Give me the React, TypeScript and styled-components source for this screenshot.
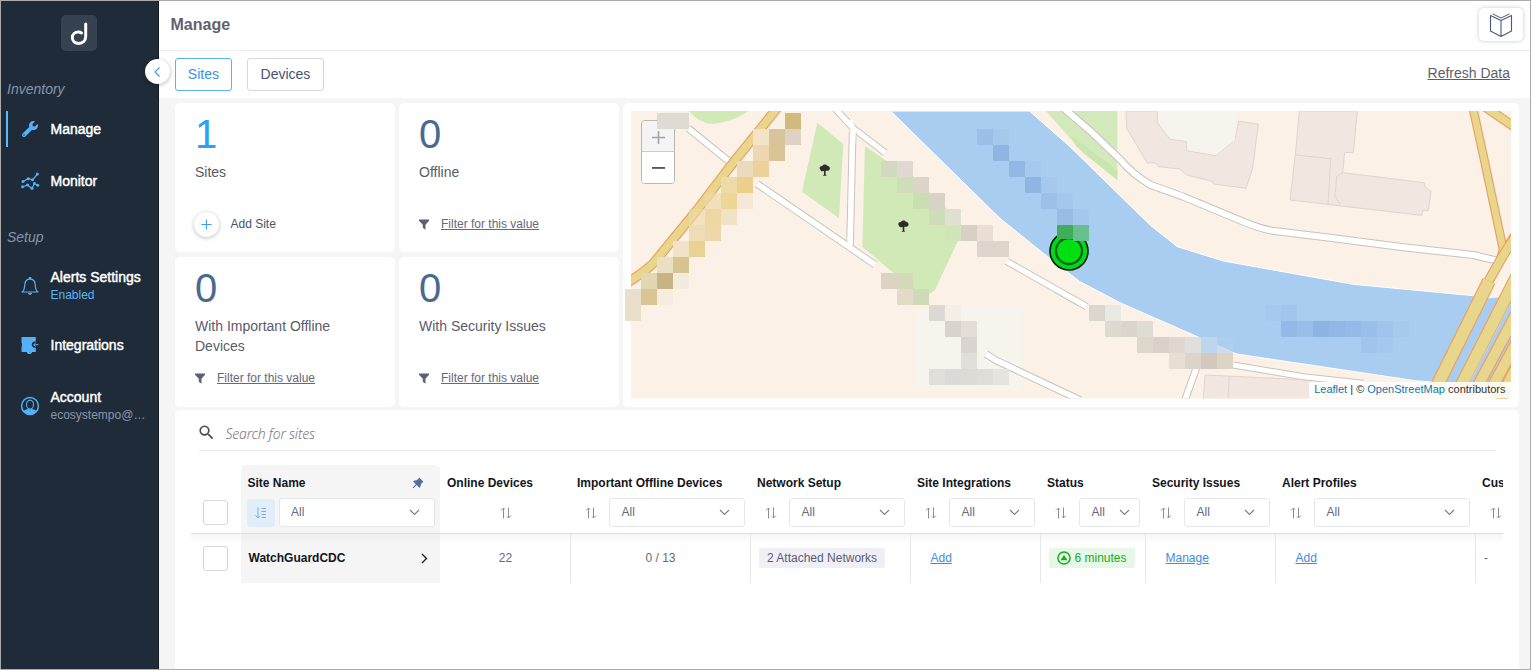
import React from 'react';
import styled, { createGlobalStyle } from 'styled-components';
import { FaWrench } from 'react-icons/fa';
import { MdSearch } from 'react-icons/md';
import { AiFillPushpin } from 'react-icons/ai';

const sans = `"Liberation Sans", Arial, sans-serif`;

const GlobalStyle = createGlobalStyle`
  *, *::before, *::after { box-sizing: border-box; }
  body { margin: 0; font-family: ${sans}; color: #55586a; background: #f5f5f6; }
`;

const Shell = styled.div`
  display: flex;
  width: 100%;
  height: 670px;
  border: 1px solid #aaa;
  overflow: hidden;
`;

/* ---------- sidebar ---------- */

const Sidebar = styled.nav`
  position: relative;
  width: 158px;
  flex: none;
  background: #1f2b38;
  border-right: 1px solid #131a23;
  padding-top: 14px;
`;

const Logo = styled.div`
  width: 36px;
  height: 36px;
  margin: 0 0 28px 60px;
  border-radius: 5px;
  background: #36424f;
`;

const GroupLabel = styled.div<{ $after: number }>`
  height: 20px;
  line-height: 20px;
  padding-left: 6px;
  margin-bottom: ${(p) => p.$after}px;
  font-size: 14px;
  font-style: italic;
  color: #8894ab;
`;

const NavItem = styled.div<{ $active?: boolean; $after: number }>`
  display: flex;
  align-items: center;
  height: 36px;
  margin: 0 0 ${(p) => p.$after}px 5px;
  border-left: 2px solid ${(p) => (p.$active ? '#5db9fb' : 'transparent')};
  padding-left: 12px;
`;

const NavIcon = styled.span`
  display: flex;
  width: 20px;
  height: 20px;
  margin-right: 10.5px;
  align-items: center;
  justify-content: center;
  color: #54b1f8;
`;

const NavText = styled.div`
  font-size: 14px;
  line-height: 18px;
  color: #fff;
  -webkit-text-stroke: 0.45px #fff;
  white-space: nowrap;
`;

const NavSub = styled.div<{ $color: string }>`
  font-size: 12px;
  line-height: 18px;
  color: ${(p) => p.$color};
  -webkit-text-stroke: 0;
`;

const CollapseButton = styled.div`
  position: absolute;
  top: 58px;
  left: 144px;
  width: 25px;
  height: 25px;
  border-radius: 50%;
  background: #fff;
  box-shadow: 0 1px 4px rgba(0, 0, 0, 0.3);
  display: flex;
  align-items: center;
  justify-content: center;
  z-index: 2;
`;

/* ---------- main ---------- */

const Main = styled.main`
  flex: 1;
  min-width: 0;
  display: flex;
  flex-direction: column;
  background: #f5f5f6;
`;

const Header = styled.header`
  height: 50px;
  flex: none;
  display: flex;
  justify-content: space-between;
  background: #fff;
  border-bottom: 1px solid #ececee;
  padding: 7px 7px 0 11.5px;
`;

const Title = styled.h1`
  margin: 7px 0 0;
  font-size: 16px;
  line-height: 20px;
  color: #5f6170;
`;

const DocsButton = styled.div`
  width: 44px;
  height: 33px;
  border-radius: 5px;
  background: #fff;
  box-shadow: 0 0 4px rgba(0, 0, 0, 0.22);
  display: flex;
  justify-content: center;
  align-items: center;
`;

const TabBar = styled.div`
  height: 47px;
  flex: none;
  display: flex;
  background: #fff;
  padding: 7px 20px 0 15.5px;
  margin-bottom: 5px;
`;

const Tab = styled.div<{ $active?: boolean }>`
  height: 33px;
  padding: 0 12.3px;
  margin-right: 15px;
  border: 1px solid ${(p) => (p.$active ? '#5cb3e9' : '#d6d7da')};
  border-radius: 3px;
  font-size: 14px;
  line-height: 30px;
  color: ${(p) => (p.$active ? '#3d8fe6' : '#4a5270')};
`;

const Refresh = styled.a`
  margin-left: auto;
  font-size: 14px;
  line-height: 31px;
  text-decoration: underline;
  color: #5c5f6c;
`;

const Overview = styled.section`
  display: grid;
  grid-template-columns: 220px 220px 896px;
  column-gap: 4px;
  height: 304px;
  flex: none;
  padding-left: 16px;
`;

const StatColumn = styled.div`
  display: grid;
  grid-template-rows: 149px 150px;
  row-gap: 5px;
`;

const StatCard = styled.div`
  background: #fff;
  border-radius: 5px;
  padding: 8px 20px 0;
  display: flex;
  flex-direction: column;
`;

const StatValue = styled.div<{ $accent?: boolean }>`
  height: 46px;
  line-height: 47px;
  font-size: 40px;
  color: ${(p) => (p.$accent ? '#2c9ff7' : '#4b6a8e')};
`;

const StatLabel = styled.div`
  margin-top: 5px;
  font-size: 14px;
  line-height: 20px;
  min-height: 40px;
  color: #5a5b69;
`;

const StatAction = styled.div`
  display: flex;
  align-items: center;
  height: 26px;
  margin-top: 9px;
  font-size: 12px;
`;

const FilterLink = styled.a`
  margin-left: 12px;
  color: #666979;
  text-decoration: underline;
`;

const AddCircle = styled.span`
  width: 25px;
  height: 25px;
  margin-left: -1px;
  border-radius: 50%;
  box-shadow: 0 1px 4px rgba(0, 0, 0, 0.26);
  display: flex;
  align-items: center;
  justify-content: center;
`;

const AddText = styled.span`
  margin-left: 11.5px;
  color: #45546b;
`;

const MapCard = styled.div`
  position: relative;
  background: #fff;
  border-radius: 5px;
`;

const MapArt = styled.svg`
  display: block;
`;

const MapOverlay = styled.svg`
  position: absolute;
  inset: 0;
`;

const ZoomControl = styled.div`
  position: absolute;
  left: 18px;
  top: 17px;
  width: 34px;
  height: 64px;
  border: 1.5px solid #bcb6b0;
  border-radius: 4px;
  overflow: hidden;
`;

const ZoomButton = styled.div<{ $disabled?: boolean }>`
  height: 31px;
  padding-top: ${(p) => (p.$disabled ? 3 : 0)}px;
  display: flex;
  align-items: center;
  justify-content: center;
  background: ${(p) => (p.$disabled ? '#f4f4f4' : '#fff')};
  border-bottom: ${(p) => (p.$disabled ? '1px solid #ccc' : 'none')};
`;

const Attribution = styled.div`
  position: absolute;
  right: 8px;
  bottom: 9px;
  height: 16px;
  padding: 0 5.5px;
  background: rgba(255, 255, 255, 0.86);
  font-size: 11px;
  line-height: 15px;
  color: #333;
  white-space: nowrap;

  a { color: #0f78a8; }
`;

/* ---------- table ---------- */

const TableCard = styled.section`
  width: 1344px;
  flex: 1;
  margin: 3px 0 0 16px;
  padding: 0 16px;
  background: #fff;
  border-radius: 5px 5px 0 0;
  overflow: hidden;
`;

const SearchBar = styled.div`
  display: flex;
  align-items: center;
  height: 41px;
  margin: 0 7px 14px 8px;
  border-bottom: 1px solid #e9eaec;
  color: #484a58;

  svg { margin: 5px 10px 0 -2.5px; }
`;

const SearchHint = styled.span`
  margin-top: 7px;
  font-family: "Noto Sans", "Open Sans", sans-serif;
  font-style: italic;
  font-weight: 300;
  font-size: 14px;
  letter-spacing: -0.2px;
  line-height: 20px;
  color: #777883;
`;

const Row = styled.div<{ $height: number; $lined?: boolean }>`
  display: flex;
  width: 1312px;
  height: ${(p) => p.$height}px;
  overflow: hidden;
  border-bottom: ${(p) => (p.$lined ? '1px solid #dededf' : 'none')};
`;

const BodyRow = styled(Row)`
  background: linear-gradient(#f6f6f7, #fff 9px);
`;

const CheckCell = styled.div<{ $top: number }>`
  width: 50px;
  flex: none;
  padding: ${(p) => p.$top}px 0 0 12px;
`;

const Checkbox = styled.div`
  width: 25px;
  height: 25px;
  border: 1.5px solid #d6d7db;
  border-radius: 3px;
  background: #fff;
`;

const HeadCell = styled.div<{ $width: number; $pinned?: boolean }>`
  width: ${(p) => p.$width}px;
  flex: none;
  background: ${(p) => (p.$pinned ? '#f5f5f6' : 'transparent')};
  border-radius: 5px 5px 0 0;
  padding: 8px 5px 0 ${(p) => (p.$pinned ? 5.5 : 6.5)}px;
`;

const HeadTitle = styled.div<{ $indent?: number }>`
  display: flex;
  align-items: center;
  justify-content: space-between;
  height: 20px;
  padding: 0 8px 0 ${(p) => p.$indent ?? 0.5}px;
  font-size: 12px;
  font-weight: 700;
  line-height: 18px;
  color: #14161c;
  white-space: nowrap;

  svg { margin-right: 2px; }
`;

const HeadTools = styled.div<{ $center?: boolean }>`
  display: flex;
  align-items: center;
  justify-content: ${(p) => (p.$center ? 'center' : 'flex-start')};
  height: 29px;
  margin-top: 5px;
`;

const SortBox = styled.span<{ $active?: boolean }>`
  width: 28px;
  height: 28px;
  flex: none;
  margin-right: ${(p) => (p.$active ? 4 : 4.5)}px;
  border-radius: 3px;
  background: ${(p) => (p.$active ? '#e1eefa' : 'transparent')};
  display: flex;
  align-items: center;
  justify-content: center;
`;

const Select = styled.div<{ $tight?: boolean }>`
  flex: 1;
  display: flex;
  align-items: center;
  justify-content: space-between;
  height: 29px;
  border: 1px solid #e6e7ea;
  border-radius: 3px;
  background: #fff;
  padding: 0 ${(p) => (p.$tight ? 9 : 14)}px 1px 11.5px;
  font-size: 12px;
  color: #666979;
`;

const Cell = styled.div<{ $width: number; $pad: number; $border?: boolean; $center?: boolean }>`
  width: ${(p) => p.$width}px;
  flex: none;
  display: flex;
  align-items: center;
  justify-content: ${(p) => (p.$center ? 'center' : 'flex-start')};
  padding: 0 0 1px ${(p) => p.$pad}px;
  border-left: 1px solid ${(p) => (p.$border ? '#e6e7ea' : 'transparent')};
  font-size: 12px;
  white-space: nowrap;
  color: #666979;
`;

const NameCell = styled.div`
  width: 199px;
  flex: none;
  display: flex;
  align-items: center;
  justify-content: space-between;
  background: linear-gradient(#efeff0, #f5f5f6 9px);
  padding: 0 12px 1px 7.5px;
  font-size: 12px;
  font-weight: 700;
  color: #14161c;
`;

const Tag = styled.span<{ $ok?: boolean }>`
  display: flex;
  align-items: center;
  height: 20px;
  padding: 0 8px;
  border-radius: 2px;
  background: ${(p) => (p.$ok ? '#e7f8e8' : '#efeff5')};
  color: ${(p) => (p.$ok ? '#1aab1f' : '#5a5c78')};

  svg { margin-right: 3.5px; }
`;

const CellLink = styled.a`
  color: #3b8ede;
  text-decoration: underline;
`;

/* ---------- icons ---------- */

const MonitorIcon = () => (
  <svg width="20" height="20" viewBox="0 0 20 20" fill="none" stroke="#54b1f8" strokeWidth="1.2">
    <path d="M3 10.500 L8.500 7.500 L12.500 9 L17.500 3" />
    <path d="M2.500 16 L7.500 14 L12 17.500 L14.500 12.500 L18 14.500" />
    <g fill="#54b1f8" stroke="none">
      {[[3, 10.5], [8.2, 7.7], [12.5, 8.8], [17.3, 3], [2.6, 15.8], [7.6, 14], [12, 17.2], [14.5, 12.5], [17.7, 14.2]].map(([x, y], i) => (
        <circle key={i} cx={x} cy={y} r="1.500" />
      ))}
    </g>
  </svg>
);

const BellIcon = () => (
  <svg width="20" height="20" viewBox="0 0 20 20" fill="none" stroke="#54b1f8" strokeWidth="1.2">
    <path d="M2 16 H18 C15.5 14.5 15.4 12 15.2 8.5 C15 5 12.6 3.2 10 3.2 C7.400 3.2 5 5 4.800 8.500 C4.600 12 4.500 14.500 2 16 Z" strokeLinejoin="round" />
    <path d="M10 1 V3" strokeWidth="2.400" />
    <path d="M8 17.300 H12 L10 18.700 Z" fill="#54b1f8" strokeWidth="0.800" />
  </svg>
);

const PuzzleIcon = () => (
  <svg width="20" height="20" viewBox="0 0 20 20">
    <path
      d="M1.500 2 H15.800 V6.500 C13 6 11.800 7.800 11.800 9.600 C11.800 11.600 13.200 13.300 15.800 12.700 V17 H12 C11.600 19.800 7.200 19.800 6.800 17 H1.500 V12.200 C2.200 11.800 2.200 8.200 1.500 7.800 Z"
      fill="#54b1f8"
    />
    <path d="M18.500 9.700 H13.800 M15.800 7.800 L13.700 9.700 L15.800 11.500" fill="none" stroke="#54b1f8" strokeWidth="1" />
  </svg>
);

const AccountIcon = () => (
  <svg width="20" height="20" viewBox="0 0 20 20" fill="none" stroke="#54b1f8">
    <circle cx="10" cy="10" r="8.400" strokeWidth="1.500" />
    <path d="M3.500 15.500 C5 13.600 8 14 8 12.600 L10 14 L12 12.600 C12 14 15 13.600 16.500 15.500 C13.500 19 6.500 19 3.500 15.500 Z" fill="#54b1f8" strokeWidth="0.500" />
    <ellipse cx="10" cy="8.600" rx="3.500" ry="4.500" strokeWidth="1.100" fill="#1f2b38" />
  </svg>
);

const LogoMark = () => (
  <svg width="36" height="36" viewBox="0 0 36 36" fill="none" stroke="#fff" strokeWidth="3" strokeLinecap="round">
    <path d="M24.700 9 V21.300 C24.700 25.800 21.700 28.400 17.800 28.400 C14 28.400 11.300 26 11.300 22.600 C11.300 19.300 14 17.100 17.300 17.100 C18.700 17.100 19.800 17.500 20.500 18" />
  </svg>
);

const BookIcon = () => (
  <svg width="24" height="26" viewBox="0 0 24 26" fill="none" stroke="#485a78" strokeWidth="1.100" strokeLinejoin="round">
    <path d="M1.500 3.500 L12 8.500 L22.500 3.500 V19 L12 24.500 L1.500 19 Z M12 8.500 V24.500" />
    <path d="M3.500 1.800 L12 6 L20.500 1.800" strokeWidth="1" />
  </svg>
);

const FunnelIcon = () => (
  <svg width="10" height="11" viewBox="0 0 10 11">
    <path d="M0 0.500 H10 V1.700 L6.500 5.800 V10.700 L3.800 8.800 V5.800 L0 1.700 Z" fill="#5d5f72" />
  </svg>
);

const SortIcon = () => (
  <svg width="12" height="12" viewBox="0 0 12 12" fill="none" stroke="#8a8d9b" strokeWidth="1">
    <path d="M3.500 11.500 V1 M1 3.500 L3.500 1 L5 2.500 M8.500 0.500 V11 M7 9.500 L8.500 11 L11 8.500" />
  </svg>
);

const SortDescIcon = () => (
  <svg width="12" height="12" viewBox="0 0 12 12" fill="none" stroke="#6fb2e6" strokeWidth="1">
    <path d="M3 0.500 V11 M0.500 8.500 L3 11 L5 9 M6.500 1.500 H11 M6.500 4.500 H11 M6.500 7.500 H11 M6.500 10.500 H11" />
  </svg>
);

const ChevronDown = () => (
  <svg width="11" height="7" viewBox="0 0 11 7" fill="none" stroke="#777a88" strokeWidth="1.100">
    <path d="M1 1 L5.500 5.500 L10 1" />
  </svg>
);

const StatusUpIcon = () => (
  <svg width="14" height="14" viewBox="0 0 14 14">
    <circle cx="7" cy="7" r="6.100" fill="none" stroke="#1aab1f" strokeWidth="1.500" />
    <path d="M7 4 L10.500 9.300 H3.500 Z" fill="#1aab1f" />
  </svg>
);

/* ---------- map ---------- */

// Blurred-out street names: [column, row, colour, opacity] on a 16px grid.
const mosaic: [number, number, string, number?][] = [
  [2, 0, '#dedbd6'], [3, 0, '#dfdad2'],
  [10, 0, '#d2ba7f'], [9, 1, '#d8c498'], [10, 1, '#dfd2c5'], [8, 1, '#f2e3c9'], [9, 2, '#d8c496'],
  [8, 2, '#edd8b3'], [8, 3, '#ecd199'], [7, 3, '#e9dbbb'], [7, 4, '#ebd08c'], [6, 4, '#eddba9'],
  [6, 5, '#eed697'], [7, 5, '#f5e8d8'], [5, 5, '#eed9a6', 0.7], [5, 6, '#efd7a4'], [6, 6, '#f2e2c4'],
  [5, 7, '#eed8ab'], [4, 6, '#efd8a8', 0.6], [4, 7, '#efdcb5'], [4, 8, '#ead294'], [3, 8, '#f1e2c8'],
  [3, 9, '#d8c48f'], [2, 9, '#eadfc3'], [2, 10, '#c8b385'], [1, 10, '#e3d7b2'], [3, 10, '#f3ebdf'],
  [1, 11, '#dac694'], [0, 11, '#e9dfcd'], [2, 11, '#f6ecdf'], [0, 12, '#eae0ca'],
  [16, 3, '#d3d9be'], [17, 3, '#e0d8d1'], [17, 4, '#cfdeb8'], [18, 4, '#ddd5c9'], [18, 5, '#cbdeb1'],
  [19, 5, '#d8d2c8'], [19, 6, '#cfdcb8'], [20, 6, '#e0e0d2'], [20, 7, '#d1e6b8'], [21, 7, '#d8cfc6'],
  [22, 7, '#ebdfd3'], [22, 8, '#dfd5cd'], [23, 8, '#e0d5ca'],
  [16, 10, '#ddd3c5'], [17, 10, '#d3dab9'], [17, 11, '#e2dbc8'], [18, 11, '#cfdab8'],
  [19, 12, '#dcd8d4'], [20, 12, '#f4eee7'], [20, 13, '#d9d3cd'], [21, 13, '#e4ddd6'], [21, 14, '#dad5d0'],
  [21, 15, '#e2dfda'], [19, 16, '#e2dfdb'], [20, 16, '#dcdad7'], [21, 16, '#dedad6'], [22, 16, '#e0dcd8'], [23, 16, '#e7e3df'],
  [22, 1, '#9bbfe8'], [23, 1, '#a5c8ed'], [23, 2, '#8fb6e3'], [24, 3, '#93b8e5'], [25, 3, '#a6c9ee'],
  [25, 4, '#8fb5e3'], [26, 4, '#a6c8ed'], [26, 5, '#9cc0e9'], [27, 5, '#a5c7ed'], [27, 6, '#99bce7'], [28, 6, '#a5c7ed'],
  [29, 12, '#dbd7cf'], [30, 12, '#e9e8e2'], [30, 13, '#dfdad0'], [31, 13, '#dcd5cb'], [32, 13, '#dfdcd4'],
  [32, 14, '#ded7cc'], [33, 14, '#d9d2c8'], [34, 14, '#ded8d0'], [35, 14, '#dfe0dc'], [36, 14, '#bdd6ed'], [37, 14, '#b0cfec', 0.6],
  [34, 15, '#e7dfd3'], [35, 15, '#ddd5cb'], [36, 15, '#d2c8be'], [37, 15, '#ddd4c6'],
  [40, 12, '#a6c9ee'], [41, 12, '#a1c5ed'], [41, 13, '#92b9e7'], [42, 13, '#98bee9'], [43, 13, '#8db5e4'],
  [44, 13, '#90b7e5'], [45, 13, '#94bae7'], [46, 13, '#9abfe9'], [47, 13, '#a0c4ec'], [48, 13, '#a6c9ee'],
  [46, 14, '#a0c4ec'], [47, 14, '#a4c8ee'],
];

const Road = ({ d, w = 15 }: { d: string; w?: number }) => (
  <g fill="none" strokeLinejoin="round">
    <path d={d} stroke="#c8c3be" strokeWidth={w + 6} />
    <path d={d} stroke="#fff" strokeWidth={w} />
  </g>
);

const Highway = ({ d, w }: { d: string; w: number }) => (
  <g fill="none" strokeLinejoin="round">
    <path d={d} stroke="#eba063" strokeWidth={w + 7} />
    <path d={d} stroke="#e7d68c" strokeWidth={w} />
  </g>
);

const Tree = ({ x, y }: { x: number; y: number }) => (
  <path
    transform={`translate(${x} ${y})`}
    d="M-14 -2 C-18 -10 -10 -12 -7 -12 C-4 -18 6 -17 7 -13 C14 -13 18 -6 14 0 C10 4 4 2 3 2 V14 L6 17 H-6 L-2 14 V2 C-6 6 -12 4 -14 -2 Z"
    fill="#2c2c2c"
  />
);

const CityMap = () => (
  <MapArt width="896" height="304" viewBox="623 103 896 304">
    <defs>
      <clipPath id="map-area">
        <rect x="631" y="111" width="880" height="287.500" />
      </clipPath>
    </defs>
    <g clipPath="url(#map-area)">
      <rect x="631" y="111" width="880" height="288" fill="#fbf1e6" />
      <g transform="translate(620 100) scale(0.333333)">
        <path d="M207 33 H385 C350 60 290 76 260 70 C235 60 220 50 207 33 Z" fill="#d1e9b7" />
        <path d="M592 68 L670 132 L657 354 L546 275 Z" fill="#d1e9b7" />
        <path d="M735 138 L800 183 H850 L880 231 L975 320 L1023 375 V415 L1015 420 L945 570 L925 585 L880 570 L727 440 Z" fill="#d1e9b7" />
        <path d="M890 640 L960 620 H1210 V870 H880 Z" fill="#f7f3ed" />
        <path d="M812 33 H1228 L1350 140 L1590 375 L1672 440 L1810 483 L2200 553 L2560 587 L2760 596 V870 L2385 842 L1850 762 L1500 608 L1380 545 L1280 468 L1140 355 Z" fill="#a9cdf0" stroke="#fff" strokeWidth="3" />
        <path d="M1278 33 H1492 V240 L1390 160 Z" fill="#d3e9bb" />
        <path d="M1492 210 V240 L1370 140 L1350 105 Z" fill="#c8e6ae" />
      </g>
      <g transform="translate(1070 100) scale(0.333333)">
        <g fill="#f1e7e0" stroke="#e0d4ce" strokeWidth="3">
          <path d="M168 33 H262 V68 L300 118 L350 124 V152 L438 167 L494 120 L506 64 L565 72 L548 205 L528 265 L432 252 L425 243 L350 225 L330 207 L265 200 L255 188 L232 189 L170 85 Z" />
          <path d="M688 33 H862 L850 158 L824 157 L818 218 L1062 248 L1066 262 L1083 274 L1075 332 L1060 330 L1055 346 L660 300 L676 165 Z" />
          <path d="M676 165 L782 176 L774 312 M818 218 L800 230 L795 290 L810 312" fill="none" />
          <path d="M405 825 L720 840 V900 H400 Z M478 828 L474 900" />
        </g>
        <path d="M266 33 H503 L494 120 L438 165 L352 150 V122 L302 116 L264 66 Z" fill="#f7f4ee" />
        <Road d="M-60 -10 L60 92 L150 178 Q185 220 240 254 L340 290 L520 365 Q580 390 620 394 L780 413 L1000 442 L1210 465 L1290 484" w={18} />
        <Road d="M490 795 L700 830 L880 850" w={15} />
        <Road d="M384 790 L345 900" w={17} />
        <Road d="M-40 570 L30 610" w={15} />
        <path d="M1215 600 L1345 400 V640 L1300 590 Z" fill="#fbf3ea" />
        <Highway d="M1215 0 L1350 92" w={22} />
        <Highway d="M1345 392 L1312 440" w={22} />
        <Highway d="M1208 20 L1245 190 L1300 450 L1290 480" w={20} />
        <Highway d="M1345 395 L1300 465 L1235 580" w={24} />
        <Highway d="M1347 516 L1160 883" w={33} />
        <Highway d="M1257 543 L1095 870" w={35} />
        <Highway d="M1355 612 L1210 883" w={30} />
        <Highway d="M1360 690 L1255 883" w={30} />
        <Highway d="M1370 740 L1290 900" w={30} />
        <path d="M1322 610 L1200 846" stroke="#c9cfc8" strokeWidth="4" />
      </g>
      <g transform="translate(620 100) scale(0.333333)">
        <Road d="M205 85 L340 195" w={17} />
        <Road d="M640 20 L700 85 L795 158" w={16} />
        <Road d="M698 95 L690 440" w={17} />
        <Road d="M412 252 L765 494" w={17} />
        <path d="M688 60 L700 86 L698 130 M690 410 V445" stroke="#fff" strokeWidth="15" fill="none" />
        <Road d="M1160 484 L1400 620" w={16} />
        <Road d="M1098 762 L1130 782 L1380 900" w={17} />
        <Highway d="M475 20 L330 200 L235 325 L100 490 Q75 515 20 550" w={23} />
        <Tree x={614} y={210} />
        <Tree x={850} y={378} />
      </g>
    </g>
    <circle cx="1069" cy="251" r="19" fill="#00d918" stroke="#061a08" strokeWidth="1.600" />
    <circle cx="1069" cy="251" r="13" fill="#00e010" stroke="#08661a" strokeWidth="2.300" />
  </MapArt>
);

const MosaicLayer = () => (
  <MapOverlay width="896" height="304" viewBox="623 103 896 304">
    {mosaic.map(([c, r, fill, opacity = 1]) => (
      <rect key={`${c}-${r}`} x={625 + c * 16} y={113 + r * 16} width="16" height="16" fill={fill} opacity={opacity} />
    ))}
    <rect x="1057" y="225" width="16" height="14" fill="#40ad5b" />
    <rect x="1073" y="225" width="16" height="16" fill="#66bf8c" />
  </MapOverlay>
);

/* ---------- data ---------- */

type Column = { title: string; width: number; select?: boolean; tight?: boolean };

const columns: Column[] = [
  { title: 'Online Devices', width: 130 },
  { title: 'Important Offline Devices', width: 180, select: true },
  { title: 'Network Setup', width: 160, select: true },
  { title: 'Site Integrations', width: 130, select: true },
  { title: 'Status', width: 105, select: true, tight: true },
  { title: 'Security Issues', width: 130, select: true },
  { title: 'Alert Profiles', width: 200, select: true },
];

const FilterAction = () => (
  <StatAction>
    <FunnelIcon />
    <FilterLink>Filter for this value</FilterLink>
  </StatAction>
);

export default function App() {
  return (
    <Shell>
      <GlobalStyle />
      <Sidebar>
        <Logo><LogoMark /></Logo>
        <GroupLabel $after={12}>Inventory</GroupLabel>
        <NavItem $active $after={16}>
          <NavIcon><FaWrench size={16} /></NavIcon>
          <NavText>Manage</NavText>
        </NavItem>
        <NavItem $after={28}>
          <NavIcon><MonitorIcon /></NavIcon>
          <NavText>Monitor</NavText>
        </NavItem>
        <GroupLabel $after={21}>Setup</GroupLabel>
        <NavItem $after={23}>
          <NavIcon><BellIcon /></NavIcon>
          <NavText>Alerts Settings<NavSub $color="#5db4f5">Enabled</NavSub></NavText>
        </NavItem>
        <NavItem $after={25}>
          <NavIcon><PuzzleIcon /></NavIcon>
          <NavText>Integrations</NavText>
        </NavItem>
        <NavItem $after={0}>
          <NavIcon><AccountIcon /></NavIcon>
          <NavText>Account<NavSub $color="#8c97a8">ecosystempo@…</NavSub></NavText>
        </NavItem>
        <CollapseButton>
          <svg width="7" height="10" viewBox="0 0 7 10" fill="none" stroke="#3f97e0" strokeWidth="1.100">
            <path d="M5.500 0.500 L1 5 L5.500 9.500" />
          </svg>
        </CollapseButton>
      </Sidebar>

      <Main>
        <Header>
          <Title>Manage</Title>
          <DocsButton><BookIcon /></DocsButton>
        </Header>
        <TabBar>
          <Tab $active>Sites</Tab>
          <Tab>Devices</Tab>
          <Refresh>Refresh Data</Refresh>
        </TabBar>

        <Overview>
          <StatColumn>
            <StatCard>
              <StatValue $accent>1</StatValue>
              <StatLabel>Sites</StatLabel>
              <StatAction>
                <AddCircle>
                  <svg width="11" height="11" viewBox="0 0 11 11">
                    <path d="M5.500 0.500 V10.500 M0.500 5.500 H10.500" stroke="#3d9cec" strokeWidth="1" />
                  </svg>
                </AddCircle>
                <AddText>Add Site</AddText>
              </StatAction>
            </StatCard>
            <StatCard>
              <StatValue>0</StatValue>
              <StatLabel>With Important Offline Devices</StatLabel>
              <FilterAction />
            </StatCard>
          </StatColumn>
          <StatColumn>
            <StatCard>
              <StatValue>0</StatValue>
              <StatLabel>Offline</StatLabel>
              <FilterAction />
            </StatCard>
            <StatCard>
              <StatValue>0</StatValue>
              <StatLabel>With Security Issues</StatLabel>
              <FilterAction />
            </StatCard>
          </StatColumn>
          <MapCard>
            <CityMap />
            <ZoomControl>
              <ZoomButton $disabled>
                <svg width="13" height="13" viewBox="0 0 13 13" stroke="#a5a5a5" strokeWidth="1.600">
                  <path d="M6.500 0 V13 M0 6.500 H13" />
                </svg>
              </ZoomButton>
              <ZoomButton>
                <svg width="13" height="2" viewBox="0 0 13 2"><rect width="13" height="1.300" y="0.300" fill="#111" /></svg>
              </ZoomButton>
            </ZoomControl>
            <MosaicLayer />
            <Attribution>
              <a>Leaflet</a> | © <a>OpenStreetMap</a> contributors
            </Attribution>
          </MapCard>
        </Overview>

        <TableCard>
          <SearchBar>
            <MdSearch size={19} />
            <SearchHint>Search for sites</SearchHint>
          </SearchBar>
          <Row $height={69} $lined>
            <CheckCell $top={35}><Checkbox /></CheckCell>
            <HeadCell $width={199} $pinned>
              <HeadTitle $indent={1}>Site Name<AiFillPushpin size={14} color="#566f97" /></HeadTitle>
              <HeadTools>
                <SortBox $active><SortDescIcon /></SortBox>
                <Select>All<ChevronDown /></Select>
              </HeadTools>
            </HeadCell>
            {columns.map((c) => (
              <HeadCell key={c.title} $width={c.width}>
                <HeadTitle>{c.title}</HeadTitle>
                <HeadTools $center={!c.select}>
                  {c.select ? (
                    <>
                      <SortBox><SortIcon /></SortBox>
                      <Select $tight={c.tight}>All<ChevronDown /></Select>
                    </>
                  ) : (
                    <SortIcon />
                  )}
                </HeadTools>
              </HeadCell>
            ))}
            <HeadCell $width={34}>
              <HeadTitle>Cus</HeadTitle>
              <HeadTools><SortBox><SortIcon /></SortBox></HeadTools>
            </HeadCell>
          </Row>
          <BodyRow $height={49}>
            <CheckCell $top={12}><Checkbox /></CheckCell>
            <NameCell>
              WatchGuardCDC
              <svg width="7" height="11" viewBox="0 0 7 11" fill="none" stroke="#222" strokeWidth="1.400">
                <path d="M1 1 L5.500 5.500 L1 10" />
              </svg>
            </NameCell>
            <Cell $width={130} $pad={0} $center>22</Cell>
            <Cell $width={180} $pad={0} $border $center>0 / 13</Cell>
            <Cell $width={160} $pad={8} $border><Tag>2 Attached Networks</Tag></Cell>
            <Cell $width={130} $pad={19.5} $border><CellLink>Add</CellLink></Cell>
            <Cell $width={105} $pad={8} $border><Tag $ok><StatusUpIcon />6 minutes</Tag></Cell>
            <Cell $width={130} $pad={19.5} $border><CellLink>Manage</CellLink></Cell>
            <Cell $width={200} $pad={19.5} $border><CellLink>Add</CellLink></Cell>
            <Cell $width={34} $pad={8} $border>-</Cell>
          </BodyRow>
        </TableCard>
      </Main>
    </Shell>
  );
}
